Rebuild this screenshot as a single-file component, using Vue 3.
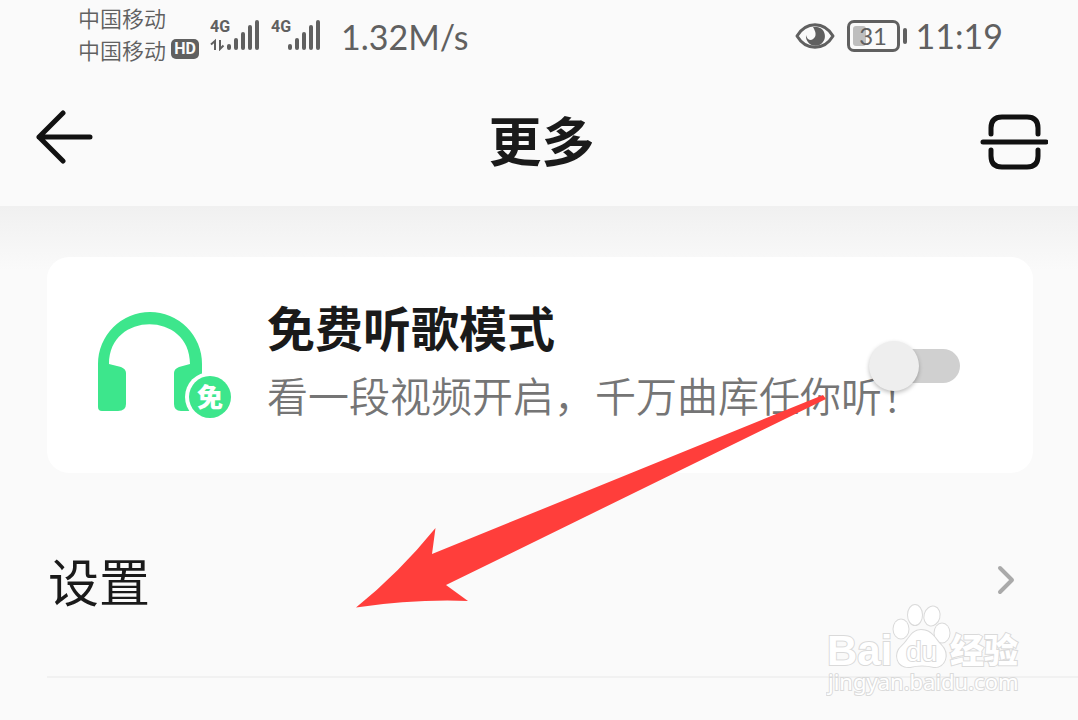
<script setup>
import { ref } from 'vue'

const freeMode = ref(false)
const bars = [
  { x: 17, y: 25, h: 6 },
  { x: 24, y: 19, h: 12 },
  { x: 31, y: 13, h: 18 },
  { x: 38, y: 6, h: 25 },
  { x: 45, y: 1, h: 30 },
]
</script>

<template>
  <main class="page">
    <div class="status">
      <div class="carriers">
        <span>中国移动</span>
        <span class="carrier">中国移动<b class="hd">HD</b></span>
      </div>
      <svg class="signal" viewBox="0 -4 52 36" role="img" aria-label="4G">
        <text class="net" x="0" y="13">4G</text>
        <path class="thin" d="M1 25.500l4-3.500v9M10 21v9l3.500-3.500" />
        <rect v-for="b in bars" :key="b.x" :x="b.x" :y="b.y" width="4" :height="b.h" rx="2" />
      </svg>
      <svg class="signal second" viewBox="0 -4 52 36" role="img" aria-label="4G">
        <text class="net" x="0" y="13">4G</text>
        <rect v-for="b in bars" :key="b.x" :x="b.x" :y="b.y" width="4" :height="b.h" rx="2" />
      </svg>
      <span class="speed">1.32M/s</span>
      <svg class="eye" viewBox="0 0 40 28" aria-hidden="true">
        <path d="M2 14C11-1 29-1 38 14C29 29 11 29 2 14Z" fill="none" stroke="#606060" stroke-width="3" stroke-linejoin="round" />
        <path d="M18 5A9.500 9.500 0 1 1 11 13Q12 18 16 18Q24 15 18 5Z" fill="#606060" />
      </svg>
      <span class="battery"><i class="charge"></i><span class="level">31</span></span>
      <span class="clock">11:19</span>
    </div>

    <header class="bar">
      <button class="icon-btn" type="button" aria-label="返回">
        <svg class="back" viewBox="0 0 58 54" aria-hidden="true">
          <path d="M28 3L4 27L28 51M4 27H55" />
        </svg>
      </button>
      <h1>更多</h1>
      <button class="icon-btn" type="button" aria-label="扫一扫">
        <svg class="scan" viewBox="0 0 68 56" aria-hidden="true">
          <path d="M11 20V14Q11 3 22 3H47Q58 3 58 14V20M11 36V42Q11 53 22 53H47Q58 53 58 42V36M3 28H66" />
        </svg>
      </button>
    </header>

    <section class="content">
      <div class="card">
        <svg class="phones" viewBox="0 0 136 112" aria-hidden="true">
          <path d="M1 55A52 52 0 0 1 105 55V98Q105 102 101 102H84Q77 102 77 95V64Q77 60 82 58L93 55C93 2 12 2 12 55L24 58Q29 60 29 64V95Q29 102 21 102H5Q1 102 1 98Z" fill="#3de68c" />
          <circle cx="113" cy="88" r="25" fill="#fff" />
          <circle cx="113" cy="88" r="21" fill="#3de68c" />
          <text class="free" x="113" y="98" text-anchor="middle">免</text>
        </svg>
        <div class="copy">
          <label for="free-mode" class="card-title">免费听歌模式</label>
          <p>看一段视频开启，千万曲库任你听！</p>
        </div>
        <input id="free-mode" v-model="freeMode" class="switch" type="checkbox" role="switch" />
      </div>

      <a class="row" href="#">
        <span>设置</span>
        <svg class="chevron" viewBox="0 0 20 30" aria-hidden="true"><path d="M4 3L16 15L4 27" /></svg>
      </a>
    </section>

    <svg class="arrow" viewBox="0 0 472 216" aria-hidden="true">
      <path d="M0 213.500Q43 179 79.500 134L76 160L467 1L470 5L90 191L112 207Q58 205 0 213.500Z" fill="#ff3e3b" />
    </svg>

    <svg class="mark" viewBox="0 0 200 100" role="img" aria-label="Baidu 经验">
      <text class="bai" x="1" y="64">Bai</text>
      <g class="paw">
        <ellipse cx="75" cy="28" rx="7.500" ry="9.500" />
        <ellipse cx="89" cy="14" rx="7" ry="10" />
        <ellipse cx="106" cy="15" rx="7.500" ry="9.500" transform="rotate(15 106 15)" />
        <ellipse cx="116" cy="32" rx="7.500" ry="9.500" />
        <path d="M95 29C106 29 109 38 115 44C124 53 119 67 108 66Q96 63 84 66C71 67 67 53 76 45C83 39 85 29 95 29Z" />
      </g>
      <text class="du" x="80" y="60">du</text>
      <text class="jy" x="124" y="62">经验</text>
      <text class="url" x="2" y="89">jingyan.baidu.com</text>
    </svg>
  </main>
</template>

<style>
body {
  margin: 0;
  background: #fafafa;
}
</style>

<style scoped>
.page {
  position: relative;
  min-height: 100vh;
  overflow: hidden;
  background: #fafafa;
  color: #1a1a1a;
  font-family: "Noto Sans CJK SC", sans-serif;
}

.status {
  display: flex;
  align-items: center;
  height: 72px;
  padding: 0 75px 0 78px;
  color: #606060;
}

.carriers {
  display: flex;
  flex-direction: column;
  width: 132px;
  margin-bottom: 6px;
  font-size: 22px;
  font-weight: 350;
  line-height: 32px;
}

.carrier {
  display: flex;
  align-items: center;
  gap: 5px;
}

.hd {
  width: 28px;
  border-radius: 5px;
  background: #606060;
  color: #fafafa;
  font: bold 16px/20px "Roboto", sans-serif;
  text-align: center;
}

.signal {
  width: 52px;
  height: 36px;
  margin-bottom: 6px;
  fill: #606060;
}

.second {
  margin-left: 9px;
}

.net {
  font: bold 16px "Roboto", sans-serif;
}

.thin {
  fill: none;
  stroke: #606060;
  stroke-width: 2;
}

.speed {
  flex: 1;
  margin: 2px 0 0 18px;
  font: 34px/44px "Lato", sans-serif;
}

.eye {
  width: 40px;
  height: 28px;
  margin-right: 12px;
}

.battery {
  position: relative;
  display: flex;
  align-items: center;
  justify-content: center;
  box-sizing: border-box;
  width: 53px;
  height: 32px;
  margin-right: 16px;
  border: 3px solid #606060;
  border-radius: 7px;
}

.battery::after {
  content: "";
  position: absolute;
  top: 5px;
  right: -10px;
  width: 4px;
  height: 16px;
  border-radius: 2px;
  background: #606060;
}

.charge {
  position: absolute;
  top: 3px;
  bottom: 3px;
  left: 3px;
  width: 13px;
  border-radius: 3px;
  background: #bebebe;
}

.level {
  position: relative;
  font: 24px/26px "Lato", sans-serif;
}

.clock {
  font: 34px/44px "Lato", sans-serif;
}

.bar {
  display: flex;
  align-items: center;
  justify-content: space-between;
  height: 134px;
  padding: 0 30px 0 35px;
}

h1 {
  margin: 0;
  font-size: 53px;
  font-weight: 700;
  line-height: 72px;
}

.icon-btn {
  display: flex;
  width: 68px;
  padding: 0;
  border: 0;
  background: none;
}

.icon-btn svg {
  fill: none;
  stroke: #111;
  stroke-width: 5;
  stroke-linecap: round;
  stroke-linejoin: round;
}

.back {
  width: 58px;
  height: 54px;
  margin-bottom: 4px;
}

.scan {
  width: 68px;
  height: 56px;
  margin-top: 6px;
}

.content {
  padding: 51px 0 0 47px;
  background: linear-gradient(#f0f0f0, #fafafa 64px);
}

.card {
  position: relative;
  display: flex;
  align-items: center;
  box-sizing: border-box;
  height: 216px;
  margin-right: 45px;
  padding-left: 50px;
  border-radius: 22px;
  background: #fff;
}

.phones {
  flex: none;
  width: 136px;
  height: 112px;
  margin-right: 34px;
}

.free {
  fill: #fff;
  font-size: 26px;
  font-weight: 900;
}

.copy {
  margin-bottom: 10px;
}

.card-title {
  font-size: 48px;
  font-weight: 700;
  line-height: 68px;
}

.copy p {
  margin: 0;
  color: #757575;
  font-size: 41px;
  font-weight: 350;
  line-height: 68px;
  white-space: nowrap;
}

.switch {
  position: absolute;
  top: 92px;
  right: 73px;
  width: 88px;
  height: 34px;
  margin: 0;
  border-radius: 17px;
  background: #d0d0d0;
  appearance: none;
}

.switch::before {
  content: "";
  position: absolute;
  top: -8px;
  left: -3px;
  width: 50px;
  height: 50px;
  border-radius: 50%;
  background: #eee;
  box-shadow: 0 2px 4px rgba(0, 0, 0, 0.25);
}

.switch:checked::before {
  right: -3px;
  left: auto;
}

.row {
  display: flex;
  align-items: center;
  justify-content: space-between;
  height: 193px;
  padding: 10px 62px 0 1px;
  border-bottom: 2px solid #f1f1f1;
  color: #1a1a1a;
  font-size: 51px;
  text-decoration: none;
}

.chevron {
  width: 20px;
  height: 30px;
  fill: none;
  stroke: #aaa;
  stroke-width: 4;
  stroke-linecap: round;
  stroke-linejoin: round;
}

.arrow {
  position: absolute;
  top: 394px;
  left: 356px;
  width: 472px;
  height: 216px;
  pointer-events: none;
}

.mark {
  position: absolute;
  top: 601px;
  right: 52px;
  width: 200px;
  height: 100px;
  fill: #fff;
  stroke: #dadada;
  stroke-width: 2;
  paint-order: stroke;
  pointer-events: none;
}

.bai {
  font: bold 42px "Liberation Sans", sans-serif;
}

.du {
  font: 28px "Liberation Sans", sans-serif;
}

.jy {
  font-size: 34px;
  font-weight: 900;
}

.url {
  font: 22px "Noto Sans", sans-serif;
}
</style>
